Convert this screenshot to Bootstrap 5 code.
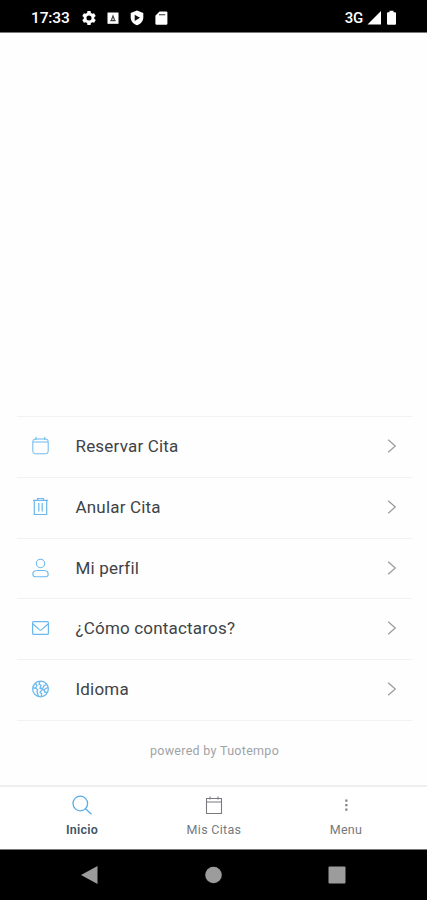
<!DOCTYPE html>
<html lang="es">
<head>
<meta charset="utf-8">
<meta name="viewport" content="width=device-width, initial-scale=1">
<title>Inicio</title>
<link href="https://cdn.jsdelivr.net/npm/bootstrap@5.3.0/dist/css/bootstrap.min.css" rel="stylesheet">
<style>
body { font-family: Roboto, "Liberation Sans", sans-serif; color: #404346; background: #fefefe; }
svg { display: block; flex: none; }
.screen { height: 900px; }
.status-bar { height: 33px; padding: 3px 26px 0 31px; border-bottom: 1px solid #777; }
.clock { font-size: 15.5px; font-weight: 500; width: 50px; line-height: 20px; letter-spacing: -.15px; }
.network { font-size: 15px; font-weight: 500; line-height: 20px; letter-spacing: -.2px; }
.status-icons { gap: 8px; }
.actions { padding: 0 15px 0 17px; }
.action { height: 60.8px; padding: 0 15px 2px 15px; border: 0; border-top: 1px solid #f2f2f3; background: none; color: inherit; font-size: 17px; letter-spacing: .19px; }
.action-list { border-bottom: 1px solid #f2f2f3; }
.action-label { margin-left: 26.500px; line-height: 24px; }
.blue { color: #6bb9ec; }
.arrow { color: #999; }
.credit { height: 64px; padding-top: 20px; font-size: 12.5px; letter-spacing: .3px; line-height: 20px; color: #a0a3a7; }
.tabs { height: 64px; padding: 0 15px 0 16px; border-top: 2px solid #efefef; }
.tab { padding-top: 7px; font-size: 12.5px; letter-spacing: .3px; line-height: 18px; color: #75797e; }
.tab svg { margin-bottom: 5px; }
.tab.current { color: #3f5568; font-weight: 600; letter-spacing: .2px; }
.system-bar { height: 51px; border-top: 1px solid #777; color: #9c9c9c; padding: 0 81px 1px 80px; }
</style>
</head>
<body>
<div class="screen d-flex flex-column overflow-hidden">
  <header class="status-bar bg-black text-white d-flex align-items-center">
    <span class="clock">17:33</span>
    <div class="status-icons d-flex">
      <svg width="16" height="16" viewBox="0 0 24 24" fill="currentColor"><path fill-rule="evenodd" d="M19.8 13.2a8 8 0 0 0 0-2.400l2.300-1.800-2.500-4.300-2.800 1.100a8 8 0 0 0-2-1.200L14.400 1.500H9.600l-.4 3.100a8 8 0 0 0-2 1.200L4.400 4.700 1.900 9l2.300 1.800a8 8 0 0 0 0 2.400L1.900 15l2.500 4.300 2.800-1.100a8 8 0 0 0 2 1.200l.4 3.100h4.800l.4-3.100a8 8 0 0 0 2-1.200l2.800 1.100 2.500-4.300zM12 15.800a3.800 3.800 0 1 1 0-7.600 3.800 3.800 0 0 1 0 7.600z"/></svg>
      <svg width="16" height="16" viewBox="0 0 16 16"><rect x="2.500" y="2.500" width="11" height="11.300" fill="#fff"/><path d="M6.300 10.500 8 6l1.700 4.500M5.300 10.700h5.400" fill="none" stroke="#444" stroke-width="1.200"/></svg>
      <svg width="16" height="16" viewBox="0 0 16 16"><path d="M8 .6 14.300 3v4.600c0 3.700-2.600 6.500-6.300 7.700-3.700-1.200-6.300-4-6.300-7.700V3z" fill="#fff"/><path d="M5.700 4.700 11 7.800l-5.300 3.100z" fill="#111"/></svg>
      <svg width="16" height="16" viewBox="0 0 16 16"><path d="M6.500 1.600h6.700q1.200 0 1.200 1.200v10.800q0 1.200-1.200 1.200H3.600q-1.200 0-1.200-1.200V5.700z" fill="#fff"/><path d="M6 4.700h6.200" stroke="#555" stroke-width="1.200"/></svg>
    </div>
    <span class="network ms-auto">3G</span>
    <svg class="ms-1" width="15" height="16" viewBox="0 0 15 16" fill="currentColor"><path d="M14 1v13.500H.5z"/></svg>
    <svg class="ms-1 me-1" width="11" height="16" viewBox="0 0 11 16" fill="currentColor"><path d="M3.500 .8h4v1.500H9q1 0 1 1v10.400q0 1-1 1H2q-1 0-1-1V3.300q0-1 1-1h1.500z"/></svg>
  </header>

  <main class="actions mt-auto">
    <div class="action-list">
      <button class="action w-100 d-flex align-items-center text-start">
        <svg class="blue" width="17" height="19" viewBox="0 0 17 19" fill="none" stroke="currentColor"><rect x=".8" y="3" width="15.400" height="14.800" rx="2.500"/><path d="M1 6h15M4 .8V4M12.800 .8V4"/></svg>
        <span class="action-label">Reservar Cita</span>
        <svg class="arrow ms-auto" width="10" height="14" viewBox="0 0 10 14" fill="none" stroke="currentColor" stroke-width="1.200"><path d="M1.200 .8 8.300 7l-7.100 6.200"/></svg>
      </button>
      <button class="action w-100 d-flex align-items-center text-start">
        <svg class="blue" width="17" height="19" viewBox="0 0 17 19" fill="none" stroke="currentColor" stroke-width="1.200"><path d="M1 3.300h15M2.300 3.300v14.200h12.400V3.300M5.500 3.300V1.500h6v1.800M6.800 6v8.500M10.200 6v8.500"/></svg>
        <span class="action-label">Anular Cita</span>
        <svg class="arrow ms-auto" width="10" height="14" viewBox="0 0 10 14" fill="none" stroke="currentColor" stroke-width="1.200"><path d="M1.200 .8 8.300 7l-7.100 6.200"/></svg>
      </button>
      <button class="action w-100 d-flex align-items-center text-start">
        <svg class="blue" width="17" height="20" viewBox="0 0 17 20" fill="none" stroke="currentColor" stroke-width="1.100"><circle cx="8.500" cy="5.500" r="4.200"/><path d="M4.800 12.500h7.400q4 .4 4 3.700 0 2.500-2.500 2.500H3.300q-2.500 0-2.500-2.500 0-3.300 4-3.700z"/></svg>
        <span class="action-label">Mi perfil</span>
        <svg class="arrow ms-auto" width="10" height="14" viewBox="0 0 10 14" fill="none" stroke="currentColor" stroke-width="1.200"><path d="M1.200 .8 8.300 7l-7.100 6.200"/></svg>
      </button>
      <button class="action w-100 d-flex align-items-center text-start">
        <svg class="blue" width="17" height="14" viewBox="0 0 17 14" fill="none" stroke="currentColor" stroke-width="1.200"><rect x=".6" y=".6" width="15.800" height="12.800" rx="1"/><path d="m1 3 6.300 5.600q1.200 1 2.400 0L16 3"/></svg>
        <span class="action-label">¿Cómo contactaros?</span>
        <svg class="arrow ms-auto" width="10" height="14" viewBox="0 0 10 14" fill="none" stroke="currentColor" stroke-width="1.200"><path d="M1.200 .8 8.300 7l-7.100 6.200"/></svg>
      </button>
      <button class="action w-100 d-flex align-items-center text-start">
        <svg class="blue" width="17" height="18" viewBox="0 0 17 18" fill="none" stroke="currentColor" stroke-width="1.300"><circle cx="8.500" cy="9" r="7.800"/><path d="M3.500 3.500 5 5.500 3.700 7.800l2 2-.7 2 1.500 4.500M1.200 8l2.500-.2M8 1.500 7 4l2 1.500-1 2.800 2.500.2 1.500-2.700 2.800-1.500M15.800 7.500l-3.300 1.800-2.500.5-2 2.400 1.700 1.600-.5 2.500M12.200 9.500l.3 2.500 2.500.5"/></svg>
        <span class="action-label">Idioma</span>
        <svg class="arrow ms-auto" width="10" height="14" viewBox="0 0 10 14" fill="none" stroke="currentColor" stroke-width="1.200"><path d="M1.200 .8 8.300 7l-7.100 6.200"/></svg>
      </button>
    </div>
    <div class="credit text-center">powered by Tuotempo</div>
  </main>

  <nav class="tabs d-flex bg-white">
    <a class="tab current col-4 d-flex flex-column align-items-center text-decoration-none" href="#">
      <svg width="22" height="22" viewBox="0 0 22 22" fill="none" stroke="#58aee5" stroke-width="1.300"><circle cx="9.300" cy="9.500" r="7.300"/><path d="m14.500 14.700 6 5.500"/></svg>
      Inicio
    </a>
    <a class="tab col-4 d-flex flex-column align-items-center text-decoration-none" href="#">
      <svg width="22" height="22" viewBox="0 0 22 22" fill="none" stroke="#777b80" stroke-width="1.100"><path d="M3.500 4.500h15v15h-15zM3.500 8h15M7 2.500v3M15 2.500v3"/></svg>
      Mis Citas
    </a>
    <a class="tab col-4 d-flex flex-column align-items-center text-decoration-none" href="#">
      <svg width="22" height="22" viewBox="0 0 22 22" fill="#888"><path d="M10.200 5.500h2.300v2.200h-2.300zM10.200 10h2.300v2.200h-2.300zM10.200 14.500h2.300v2.200h-2.300z"/></svg>
      Menu
    </a>
  </nav>

  <footer class="system-bar bg-black d-flex align-items-center justify-content-between">
    <svg width="18" height="20" viewBox="0 0 18 20" fill="currentColor"><path d="M17.500 1v18L1 10z"/></svg>
    <svg width="18" height="18" viewBox="0 0 18 18" fill="currentColor"><circle cx="9.500" cy="9" r="8.300"/></svg>
    <svg width="18" height="18" viewBox="0 0 18 18" fill="currentColor"><rect x=".5" y=".5" width="17" height="17" rx="1"/></svg>
  </footer>
</div>
<script src="https://cdn.jsdelivr.net/npm/bootstrap@5.3.0/dist/js/bootstrap.bundle.min.js"></script>
</body>
</html>
